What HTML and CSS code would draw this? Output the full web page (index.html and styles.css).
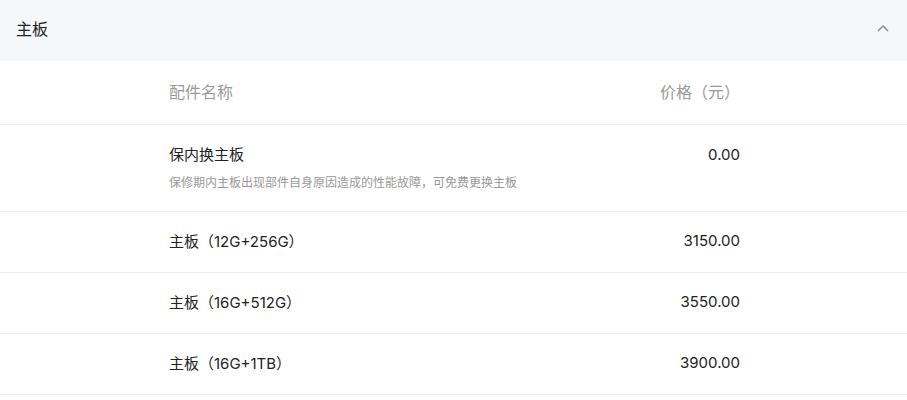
FILE: index.html
```html
<!DOCTYPE html>
<html lang="zh-CN">
<head>
<meta charset="utf-8">
<link rel="stylesheet" href="styles.css">
</head>
<body>
<div class="panel">
  <div class="panel-head">
    <span class="panel-title">主板</span>
    <svg class="chevron" width="14" height="14" viewBox="0 0 14 14"><path d="M2 10 L7 5 L12 10" fill="none" stroke="#8a8d93" stroke-width="1.5"/></svg>
  </div>
  <div class="table">
    <div class="row head">
      <div class="name">配件名称</div>
      <div class="price">价格（元）</div>
    </div>
    <div class="row tall">
      <div class="name">
        <div class="title">保内换主板</div>
        <div class="desc">保修期内主板出现部件自身原因造成的性能故障，可免费更换主板</div>
      </div>
      <div class="price">0.00</div>
    </div>
    <div class="row">
      <div class="name">主板（12G+256G）</div>
      <div class="price">3150.00</div>
    </div>
    <div class="row">
      <div class="name">主板（16G+512G）</div>
      <div class="price">3550.00</div>
    </div>
    <div class="row">
      <div class="name">主板（16G+1TB）</div>
      <div class="price">3900.00</div>
    </div>
  </div>
</div>
</body>
</html>
```
FILE: styles.css
```css
html, body {
  margin: 0;
  padding: 0;
  background: #ffffff;
}
body {
  font-family: Inter, "Noto Sans CJK SC", sans-serif;
  color: #222222;
}
.panel-head {
  height: 61px;
  background: #f5f7fa;
  display: flex;
  align-items: center;
  justify-content: space-between;
  padding: 0 17px 5px 16px;
  box-sizing: border-box;
}
.panel-title {
  font-size: 16px;
  color: #222;
}
.chevron {
  display: block;
}
.row {
  display: flex;
  align-items: center;
  justify-content: space-between;
  height: 61px;
  padding: 0 167px 3px 169px;
  border-bottom: 1px solid #eeeff1;
  font-size: 15px;
  box-sizing: border-box;
}
.row.head {
  height: 64px;
  color: #9a9a9a;
  font-size: 16px;
  padding-bottom: 4px;
}
.row.tall {
  height: 87px;
  align-items: flex-start;
  padding-top: 19px;
}
.title {
  line-height: 22px;
}
.desc {
  font-size: 12px;
  color: #999;
  margin-top: 9px;
  line-height: 16px;
}
.row.tall .price {
  line-height: 22px;
}
.price {
  text-align: right;
}
```
